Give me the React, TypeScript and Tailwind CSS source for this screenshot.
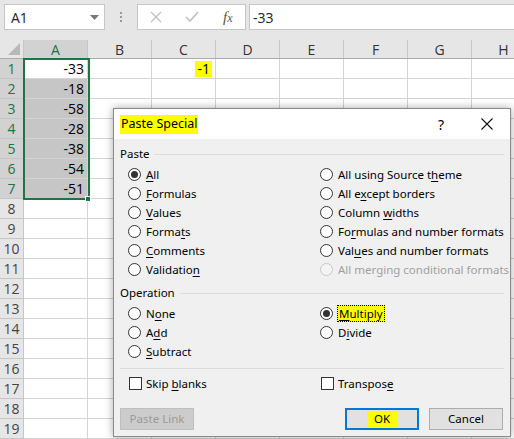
import React from "react";

const COLS = ["A", "B", "C", "D", "E", "F", "G", "H"];
const VALUES = [-33, -18, -58, -28, -38, -54, -51];
const ROWS = Array.from({ length: 19 }, (_, i) => i + 1);

function Radio({ checked, disabled }: { checked?: boolean; disabled?: boolean }) {
  return (
    <span
      className={`w-[13px] h-[13px] shrink-0 rounded-full border flex items-center justify-center ${
        disabled ? "border-[#c8c8c8] bg-[#f4f4f4]" : "border-[#333] bg-white"
      }`}
    >
      {checked && <span className="w-[7px] h-[7px] rounded-full bg-[#333]" />}
    </span>
  );
}

function Option({
  label,
  checked,
  disabled,
  focus,
}: {
  label: React.ReactNode;
  checked?: boolean;
  disabled?: boolean;
  focus?: boolean;
}) {
  return (
    <div
      className={`h-[19px] flex items-center gap-[4px] whitespace-nowrap ${
        disabled ? "text-[#a0a0a0]" : "text-black"
      }`}
    >
      <Radio checked={checked} disabled={disabled} />
      {focus ? (
        <span className="bg-[#ffff00] border border-dotted border-black px-[1px] leading-[15px]">{label}</span>
      ) : (
        <span className="pl-[1px]">{label}</span>
      )}
    </div>
  );
}

function Check({ label }: { label: React.ReactNode }) {
  return (
    <div className="h-[19px] flex items-center gap-[4px] whitespace-nowrap">
      <span className="w-[13px] h-[13px] border border-[#333] bg-white shrink-0" />
      <span>{label}</span>
    </div>
  );
}

function Group({ title, lineOffset }: { title: string; lineOffset: string }) {
  return (
    <div className="h-[18px] flex items-center">
      <span>{title}</span>
      <span className={`flex-1 h-px bg-[#dcdcdc] ${lineOffset}`} />
    </div>
  );
}

const U = ({ children }: { children: React.ReactNode }) => (
  <span className="underline underline-offset-[2px]">{children}</span>
);

function FormulaBar() {
  return (
    <div className="h-[40px] bg-[#e6e6e6] flex items-start pt-[4px] pl-[4px] text-[14px] text-[#222]">
      <div className="w-[101px] h-[26px] bg-white border border-[#c6c6c6] flex items-center justify-between pl-[6px] pr-[5px]">
        <span>A1</span>
        <svg width="9" height="5" viewBox="0 0 9 5">
          <path d="M0 0h9L4.5 5z" fill="#777" />
        </svg>
      </div>
      <div className="w-[32px] h-[26px] flex items-center justify-center">
        <div className="flex flex-col gap-[2px]">
          <span className="w-[2px] h-[2px] bg-[#999]" />
          <span className="w-[2px] h-[2px] bg-[#999]" />
          <span className="w-[2px] h-[2px] bg-[#999]" />
        </div>
      </div>
      <div className="w-[109px] h-[26px] bg-white border border-[#c6c6c6] flex items-center">
        <svg className="ml-[12px]" width="12" height="12" viewBox="0 0 12 12">
          <path d="M1 1l10 10M11 1L1 11" stroke="#c0c0c0" strokeWidth="1.3" />
        </svg>
        <svg className="ml-[23px]" width="14" height="12" viewBox="0 0 14 12">
          <path d="M1 6l4 4 8-9" stroke="#c0c0c0" strokeWidth="1.6" fill="none" />
        </svg>
        <span className="ml-[24px] italic font-['Liberation_Serif',serif] text-[15px] text-[#555]">
          f<span className="text-[12px]">x</span>
        </span>
      </div>
      <div className="ml-[3px] flex-1 h-[26px] bg-white border border-[#c6c6c6] border-r-0 flex items-center pl-[3px]">
        -33
      </div>
    </div>
  );
}

function Sheet() {
  return (
    <div className="relative text-[14px]">
      <div className="flex h-[19px] bg-[#e6e6e6] border-b border-[#ababab]">
        <div className="w-[24px] shrink-0 relative border-r border-[#c6c6c6]">
          <svg className="absolute right-[3px] bottom-[3px]" width="12" height="12" viewBox="0 0 12 12">
            <path d="M12 0V12H0z" fill="#b8b8b8" />
          </svg>
        </div>
        {COLS.map((c, i) => (
          <div
            key={c}
            className={`w-[64px] shrink-0 flex items-center justify-center border-r border-[#c6c6c6] ${
              i === 0 ? "bg-[#d2d2d2] text-[#217346]" : "text-[#333]"
            }`}
          >
            {c}
          </div>
        ))}
      </div>
      {ROWS.map((r) => {
        const sel = r <= 7;
        return (
          <div key={r} className="flex h-[20px]">
            <div
              className={`w-[24px] shrink-0 flex items-center justify-center border-r border-b border-[#c6c6c6] ${
                sel ? "bg-[#d2d2d2] text-[#217346]" : "bg-[#e6e6e6] text-[#444]"
              }`}
            >
              {r}
            </div>
            {COLS.map((c, i) => (
              <div
                key={c}
                className={`w-[64px] shrink-0 border-r border-b border-[#d4d4d4] flex items-center justify-end pr-[3px] text-black ${
                  i === 0 && sel && r > 1 ? "bg-[#c6c6c6]" : "bg-white"
                }`}
              >
                {i === 0 && sel && VALUES[r - 1]}
                {i === 2 && r === 1 && <span className="bg-[#ffff00] px-[2px] leading-[16px]">-1</span>}
              </div>
            ))}
          </div>
        );
      })}
      <div className="absolute left-[23px] top-[18px] w-[67px] h-[142px] border-2 border-[#217346]" />
      <div className="absolute left-[85px] top-[156px] w-[6px] h-[6px] bg-[#217346] border border-white" />
    </div>
  );
}

function Dialog() {
  return (
    <div className="absolute left-[113px] top-[108px] w-[398px] h-[329px] border border-[#8a8a8a] bg-[#f0f0f0] shadow-[0_0_8px_rgba(0,0,0,0.35)] flex flex-col text-[11.5px] text-black font-['Noto_Sans',sans-serif]">
      <div className="h-[30px] bg-white flex items-center pl-[6px] shrink-0">
        <span className="bg-[#ffff00] px-[1px] h-[19px] flex items-center text-[12.5px]">Paste Special</span>
        <span className="ml-auto text-[14px] mr-[37px]">?</span>
        <svg className="mr-[17px]" width="12" height="12" viewBox="0 0 12 12">
          <path d="M0.5 0.5l11 11M11.5 0.5l-11 11" stroke="#111" strokeWidth="1.1" />
        </svg>
      </div>
      <div className="flex-1 flex flex-col px-[6px] pt-[6px]">
        <Group title="Paste" lineOffset="ml-[4px]" />
        <div className="grid grid-cols-[192px_1fr] pl-[8px] mt-[2px]">
          <div className="flex flex-col">
            <Option checked label={<><U>A</U>ll</>} />
            <Option label={<><U>F</U>ormulas</>} />
            <Option label={<><U>V</U>alues</>} />
            <Option label={<>Forma<U>t</U>s</>} />
            <Option label={<><U>C</U>omments</>} />
            <Option label={<>Validatio<U>n</U></>} />
          </div>
          <div className="flex flex-col">
            <Option label={<>All using Source t<U>h</U>eme</>} />
            <Option label={<>All e<U>x</U>cept borders</>} />
            <Option label={<>Column <U>w</U>idths</>} />
            <Option label={<>Fo<U>r</U>mulas and number formats</>} />
            <Option label={<>Val<U>u</U>es and number formats</>} />
            <Option disabled label="All merging conditional formats" />
          </div>
        </div>
        <div className="mt-[5px]">
          <Group title="Operation" lineOffset="ml-[5px]" />
        </div>
        <div className="grid grid-cols-[192px_1fr] pl-[8px] mt-[2px]">
          <div className="flex flex-col">
            <Option label={<>N<U>o</U>ne</>} />
            <Option label={<>A<U>d</U>d</>} />
            <Option label={<><U>S</U>ubtract</>} />
          </div>
          <div className="flex flex-col">
            <Option checked focus label={<><U>M</U>ultiply</>} />
            <Option label={<>D<U>i</U>vide</>} />
          </div>
        </div>
        <div className="mt-[7px] h-px bg-[#dcdcdc]" />
        <div className="grid grid-cols-[192px_1fr] pl-[9px] mt-[5px]">
          <Check label={<>Skip <U>b</U>lanks</>} />
          <Check label={<>Transpos<U>e</U></>} />
        </div>
        <div className="mt-[15px] flex items-center pr-[1px]">
          <div className="w-[74px] h-[22px] border border-[#bfbfbf] bg-[#cccccc] flex items-center justify-center text-[#9a9a9a]">
            Paste Link
          </div>
          <div className="ml-auto w-[74px] h-[22px] border-2 border-[#0078d7] bg-[#e1e1e1] flex items-center justify-center">
            <span className="bg-[#ffff00] px-[7px] leading-[16px]">OK</span>
          </div>
          <div className="ml-[10px] w-[74px] h-[22px] border border-[#adadad] bg-[#e1e1e1] flex items-center justify-center">
            Cancel
          </div>
        </div>
      </div>
    </div>
  );
}

export default function App() {
  return (
    <div className="relative w-[514px] h-[439px] overflow-hidden bg-white font-['Open_Sans',sans-serif]">
      <FormulaBar />
      <Sheet />
      <Dialog />
    </div>
  );
}
